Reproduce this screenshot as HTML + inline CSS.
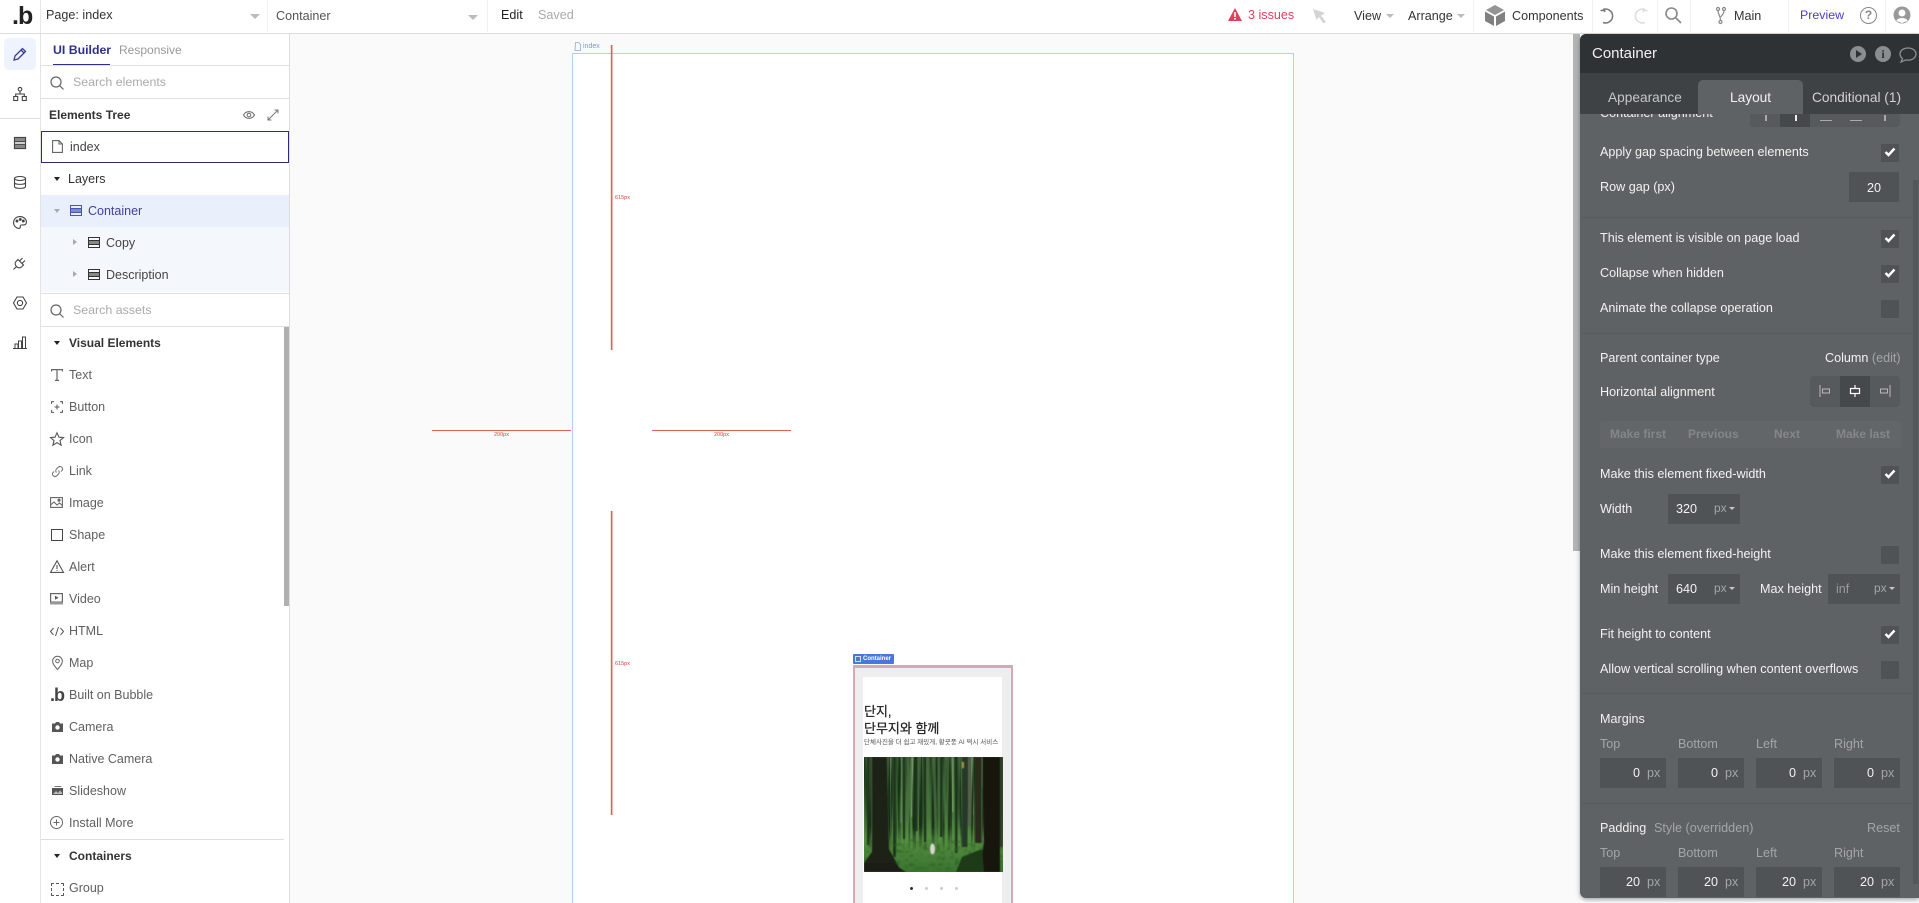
<!DOCTYPE html>
<html><head><meta charset="utf-8"><title>Bubble Editor</title>
<style>
html,body{margin:0;padding:0;width:1919px;height:903px;overflow:hidden;background:#fff}
body{position:relative;font-family:"Liberation Sans","Noto Sans CJK KR",sans-serif;font-size:12.6px;color:#3c3c3c}
.a{position:absolute}
.t{position:absolute;line-height:18px;height:18px;white-space:nowrap}
.ic{position:absolute;overflow:visible;fill:none;stroke:#555;stroke-width:1.2}
.tri{position:absolute;width:0;height:0;border-left:5px solid transparent;border-right:5px solid transparent;border-top:5px solid #bbb}
.sep{position:absolute;top:0;width:1px;height:32px;background:#f1f1f1}
.hr{position:absolute;left:41px;width:248px;height:1px;background:#e0e0e0}
.it{color:#5f5f5f;left:69px;font-size:12.5px}
.top{font-size:12.6px}
.w{color:#f2f2f2}
.g{color:#a3a6a8}
.cb{position:absolute;left:1881px;width:18px;height:18px;background:#505355;border-radius:1px}
.cb svg{position:absolute;left:3px;top:3px;width:12px;height:10px}
.in{position:absolute;background:#505355;height:30px;border-radius:1px}
.d{position:absolute;left:1582px;width:330px;height:1px;background:#585b5d}
.px{color:#a3a6a8;font-size:12px}
.hd{color:#333;font-size:12px;font-weight:bold}
.dim{color:#84878a;font-weight:bold;font-size:12px}
.lb{font-size:5.5px;color:#e0403c}
.rl{position:absolute;background:#e25f58}
.rv{box-shadow:1px 0 0 rgba(226,95,88,.45),-1px 0 0 rgba(226,95,88,.2)}
</style></head><body>

<!-- canvas -->
<div class="a" style="left:290px;top:34px;width:1290px;height:869px;background:#fafafa"></div>
<div class="a" style="left:572px;top:53px;width:720px;height:860px;background:#fff;border:1px solid #b6d0ea"></div>
<svg class="ic" style="left:575px;top:42px;stroke:#8ea8e0;stroke-width:.8" width="6" height="9"><path d="M.5.5h3l2 2v6h-5.500z"/></svg>
<div class="t" style="left:583px;top:38px;font-size:7px;color:#7f95dd">index</div>

<div class="rl rv" style="left:611px;top:45px;width:1px;height:305px"></div>
<div class="rl rv" style="left:611px;top:511px;width:1px;height:304px"></div>
<div class="rl" style="left:432px;top:430px;width:139px;height:1px"></div>
<div class="rl" style="left:652px;top:430px;width:139px;height:1px"></div>
<div class="t lb" style="left:615px;top:189px">615px</div>
<div class="t lb" style="left:615px;top:655px">615px</div>
<div class="t lb" style="left:494px;top:426px">200px</div>
<div class="t lb" style="left:714px;top:426px">200px</div>

<!-- mobile container -->
<div class="a" style="left:853px;top:654px;width:41px;height:10px;background:#4a78d8;border-radius:1px"></div>
<div class="t" style="left:863px;top:650px;font-size:6px;font-weight:bold;color:#fff">Container</div>
<div class="a" style="left:855px;top:656px;width:6px;height:6px;border:1px dashed #cfe0ff;box-sizing:border-box"></div>
<div class="a" style="left:853px;top:666px;width:156px;height:240px;background:#eee;border:2px solid #d2abb4;box-shadow:0 -1px 0 #a6b8e0"></div>
<div class="a" style="left:863px;top:677px;width:139px;height:226px;background:#fff"></div>
<div class="t" style="left:864px;top:703px;font-size:13px;color:#222;-webkit-text-stroke:.25px #222">단지,</div>
<div class="t" style="left:864px;top:720px;font-size:13px;color:#222;-webkit-text-stroke:.25px #222">단무지와 함께</div>
<div class="t" style="left:864px;top:734px;font-size:6.5px;color:#555">단체사진을 더 쉽고 재밌게, 황굣풍 AI 떡시 서비스</div>
<svg class="a" style="left:864px;top:757px" width="139" height="115" viewBox="0 0 139 115">
<defs>
<linearGradient id="bg" x1="0" y1="0" x2="0" y2="1"><stop offset="0" stop-color="#44663c"/><stop offset=".5" stop-color="#46743c"/><stop offset=".72" stop-color="#568f42"/><stop offset="1" stop-color="#3a7530"/></linearGradient>
<linearGradient id="fade" x1="0" y1="0" x2="0" y2="1"><stop offset="0" stop-color="#fff"/><stop offset=".6" stop-color="#fff"/><stop offset=".82" stop-color="#000"/></linearGradient>
<mask id="m"><rect width="139" height="115" fill="url(#fade)"/></mask>
<filter id="b" x="-5%" y="-5%" width="110%" height="110%"><feGaussianBlur stdDeviation=".5"/></filter>
<filter id="st" x="0" y="0" width="100%" height="100%" color-interpolation-filters="sRGB"><feTurbulence type="fractalNoise" baseFrequency=".32 .008" numOctaves="2" seed="7"/><feColorMatrix values="0 0 0 0 .09  0 0 0 0 .18  0 0 0 0 .09  4 0 0 0 -1.800"/></filter>
<filter id="gr" x="0" y="0" width="100%" height="100%" color-interpolation-filters="sRGB"><feTurbulence type="fractalNoise" baseFrequency=".22 .3" numOctaves="2" seed="3"/><feColorMatrix values="0 0 0 0 .18  0 0 0 0 .36  0 0 0 0 .14  3 0 0 0 -1.500"/><feGaussianBlur stdDeviation=".4"/></filter>
</defs>
<rect width="139" height="115" fill="url(#bg)"/>
<g filter="url(#b)">
<g fill="#9abb85" opacity=".55"><rect x="25" y="0" width="2" height="72"/><rect x="47" y="0" width="2.500" height="60"/><rect x="36" y="0" width="1.500" height="66"/><rect x="107" y="0" width="3" height="58"/><rect x="56" y="0" width="1.500" height="66"/><rect x="118" y="0" width="1.500" height="30"/><rect x="88" y="0" width="1.500" height="55"/></g>
</g>
<rect width="139" height="115" filter="url(#st)" mask="url(#m)"/>
<g filter="url(#b)">
<g fill="#1d351c"><rect x="3" y="0" width="2.500" height="88"/><rect x="29" y="0" width="3" height="100"/><rect x="39" y="0" width="2" height="82"/><rect x="51" y="0" width="2.500" height="74"/><rect x="60" y="0" width="2" height="85"/><rect x="76" y="0" width="2.500" height="80"/><rect x="91" y="0" width="2.500" height="96"/></g>
<rect x="0" y="82" width="139" height="33" filter="url(#gr)"/>
<path d="M8 0H23L25 92L37 114H0V106L8 95Z" fill="#1b2217"/>
<path d="M119 0H136V115H115L120 85Z" fill="#17190f"/>
<rect x="111" y="0" width="6.500" height="86" fill="#2a2a1e"/>
<rect x="98" y="0" width="5.500" height="90" fill="#26382a"/>
<rect x="104" y="0" width="3" height="68" fill="#55624a"/>
<rect x="136" y="0" width="3" height="90" fill="#33412c"/>
<path d="M0 106H28L42 115H0Z" fill="#1d1c12"/>
<path d="M98 100L118 92L120 115H92Z" fill="#1f3b18"/>
<ellipse cx="68.500" cy="92" rx="2.400" ry="5.500" fill="#d8d8d0"/>
<rect x="98" y="5" width="1.800" height="6" fill="#a89a45"/>
</g>
</svg>
<div class="a" style="left:910px;top:887px;width:3px;height:3px;border-radius:50%;background:#333"></div>
<div class="a" style="left:925px;top:887px;width:3px;height:3px;border-radius:50%;background:#ccc"></div>
<div class="a" style="left:940px;top:887px;width:3px;height:3px;border-radius:50%;background:#ccc"></div>
<div class="a" style="left:955px;top:887px;width:3px;height:3px;border-radius:50%;background:#ccc"></div>

<!-- top bar -->
<div class="a" style="left:0;top:0;width:1919px;height:33px;background:#fff;border-bottom:1px solid #ddd"></div>
<div class="t" style="left:12px;top:4px;font-size:25px;line-height:25px;height:25px;font-weight:bold;color:#222;letter-spacing:-1px">.b</div>
<div class="a" style="left:40px;top:0;width:1px;height:33px;background:#e8e8e8"></div>
<div class="t top" style="left:46px;top:6px;color:#333">Page: index</div>
<div class="tri" style="left:250px;top:14px"></div>
<div class="sep" style="left:267px"></div>
<div class="t top" style="left:276px;top:7px;color:#555">Container</div>
<div class="tri" style="left:468px;top:15px"></div>
<div class="sep" style="left:487px"></div>
<div class="t top" style="left:501px;top:6px;color:#222">Edit</div>
<div class="t top" style="left:538px;top:6px;color:#aaa">Saved</div>

<svg class="a" style="left:1228px;top:8px" width="14" height="13"><path d="M7 0L14 13H0Z" fill="#e0405a"/><rect x="6.200" y="4" width="1.600" height="5" fill="#fff"/><rect x="6.200" y="10" width="1.600" height="1.600" fill="#fff"/></svg>
<div class="t top" style="left:1248px;top:6px;color:#e0405a">3 issues</div>
<svg class="a" style="left:1312px;top:8px" width="16" height="16"><path d="M1 1L13 5L9 7.500L14 14L11.500 15.500L7 9L4.500 12Z" fill="#d4d4d4"/></svg>
<div class="t top" style="left:1354px;top:7px;color:#333">View</div>
<div class="tri" style="left:1386px;top:14px;border-width:4px 4px 0"></div>
<div class="t top" style="left:1408px;top:7px;color:#333">Arrange</div>
<div class="tri" style="left:1457px;top:14px;border-width:4px 4px 0"></div>
<div class="sep" style="left:1473px"></div>
<svg class="a" style="left:1485px;top:5px" width="20" height="21"><path d="M10 0L19 5L10 10L1 5Z" fill="#949494"/><path d="M0 6.500L9 11.500V21L0 16Z" fill="#808080"/><path d="M20 6.500L11 11.500V21L20 16Z" fill="#808080"/></svg>
<div class="t top" style="left:1512px;top:7px;color:#333">Components</div>
<div class="sep" style="left:1592px"></div>
<svg class="ic" style="left:1600px;top:8px;stroke:#777;stroke-width:1.500" width="16" height="16"><path d="M3 1.500A7 7 0 1 1 3 14.500M0.500 2.500H5M4 0.500L5 4"/></svg>
<svg class="ic" style="left:1632px;top:8px;stroke:#dcdcdc;stroke-width:1.500" width="16" height="16"><path d="M13 1.500A7 7 0 1 0 13 14.500M15.500 2.500H11M12 0.500L11 4"/></svg>
<div class="sep" style="left:1657px"></div>
<svg class="ic" style="left:1665px;top:7px;stroke:#888;stroke-width:1.600" width="17" height="17"><circle cx="6.500" cy="6.500" r="5.500"/><path d="M10.500 10.500L16 16"/></svg>
<div class="sep" style="left:1690px"></div>
<svg class="ic" style="left:1716px;top:7px;stroke:#888;stroke-width:1.200" width="10" height="17"><circle cx="2" cy="2" r="1.500"/><circle cx="8" cy="2" r="1.500"/><circle cx="4.500" cy="15" r="1.500"/><path d="M2 3.500C2 8 4.500 8 4.500 13.500M8 3.500C8 8 5 8 5 10"/></svg>
<div class="t top" style="left:1734px;top:7px;color:#333">Main</div>
<div class="sep" style="left:1788px"></div>
<div class="t" style="left:1800px;top:6px;color:#4a3bd0;font-size:12.400px">Preview</div>
<div class="a" style="left:1860px;top:7px;width:15px;height:15px;border:1.600px solid #888;border-radius:50%;text-align:center;line-height:15px;font-size:12px;font-weight:bold;color:#888">?</div>
<div class="sep" style="left:1885px"></div>
<svg class="a" style="left:1893px;top:6px" width="18" height="18"><circle cx="9" cy="9" r="8.500" fill="#999"/><circle cx="9" cy="7" r="3.500" fill="#fff"/><path d="M3.500 15C4 11 14 11 14.500 15L9 17Z" fill="#fff"/></svg>

<!-- left rail -->
<div class="a" style="left:40px;top:34px;width:1px;height:869px;background:#e4e4e4"></div>
<div class="a" style="left:4px;top:38px;width:32px;height:32px;background:#eef3fd;border-radius:5px"></div>
<svg class="ic" style="left:13px;top:47px;stroke:#3a3a9c;stroke-width:1.300" width="14" height="14"><path d="M1 13L2 9L9.500 1.500L12.500 4.500L5 12Z"/><path d="M8 3L11 6"/></svg>
<svg class="ic" style="left:13px;top:87px;stroke-width:1.100;stroke:#444" width="14" height="14"><circle cx="7" cy="2.200" r="1.800"/><rect x=".7" y="9.500" width="4" height="4"/><rect x="9.300" y="9.500" width="4" height="4"/><path d="M7 4V7M2.700 9.500V7H11.300V9.500"/></svg>
<div class="a" style="left:0;top:118px;width:40px;height:1px;background:#ddd"></div>
<svg class="ic" style="left:14px;top:137px;stroke:#444;stroke-width:1.100" width="12" height="12"><rect x=".5" y=".5" width="11" height="11"/><rect x=".5" y=".5" width="11" height="4.200" fill="#8a8a8a"/><rect x=".5" y="7.300" width="11" height="4.200" fill="#8a8a8a"/></svg>
<svg class="ic" style="left:14px;top:176px;stroke:#444;stroke-width:1.100" width="12" height="13"><ellipse cx="6" cy="2.500" rx="5.500" ry="2"/><path d="M.5 2.500V10.500C.5 13 11.500 13 11.500 10.500V2.500M.5 6.500C.5 9 11.500 9 11.500 6.500"/></svg>
<svg class="ic" style="left:13px;top:216px;stroke:#444;stroke-width:1.100" width="14" height="13"><path d="M7 .6C3 .6.6 3.300.6 6.600 .6 10 3.400 12.400 6 12.400 8 12.400 7 10.400 7.500 9.400 8 8.400 10 9.200 11.500 8.800 13 8.400 13.400 7 13.400 6 13.400 3 10.500.6 7 .6Z"/><circle cx="4" cy="5" r=".9" fill="#444"/><circle cx="7.300" cy="3.400" r=".9" fill="#444"/><circle cx="10.300" cy="5" r=".9" fill="#444"/></svg>
<svg class="ic" style="left:13px;top:256px;stroke:#444;stroke-width:1.100" width="14" height="14"><path d="M5 3.500L10.500 9L8.500 11C7 12.300 4.700 12 3.500 10.500 2 9.300 1.700 7 3 5.500ZM6.500 5L9.500 2M9 7.500L12 4.500M3.500 10.500L.5 13.500"/></svg>
<svg class="ic" style="left:13px;top:296px;stroke:#444;stroke-width:1.100" width="14" height="14"><path d="M4 1H10L13.500 7L10 13H4L.5 7Z"/><circle cx="7" cy="7" r="2.600"/></svg>
<svg class="ic" style="left:13px;top:336px;stroke:#444;stroke-width:1" width="14" height="13"><path d="M0 12.500H14M2 12V8H5V12M5.500 12V5H8.500V12M9.500 12V1H12.500V12"/></svg>

<!-- left panel -->
<div class="a" style="left:289px;top:34px;width:1px;height:869px;background:#ddd"></div>
<div class="t" style="left:53px;top:41px;color:#2f2f8f;font-size:12.300px;font-weight:bold">UI Builder</div>
<div class="t" style="left:119px;top:41px;color:#999;font-size:12px">Responsive</div>
<div class="a" style="left:53px;top:64px;width:57px;height:2px;background:#2f2f8f"></div>
<div class="hr" style="top:65px"></div>
<svg class="ic" style="left:50px;top:76px;stroke:#666;stroke-width:1.200" width="14" height="14"><circle cx="6" cy="6" r="5"/><path d="M9.500 9.500L13.500 13.500"/></svg>
<div class="t" style="left:73px;top:73px;color:#aaa;font-size:12.400px">Search elements</div>
<div class="hr" style="top:98px"></div>
<div class="t hd" style="left:49px;top:106px">Elements Tree</div>
<svg class="ic" style="left:243px;top:110px;stroke:#666;stroke-width:1" width="12" height="10"><path d="M.5 5C3 .5 9 .5 11.500 5 9 9.500 3 9.500 .5 5Z"/><circle cx="6" cy="5" r="1.800"/></svg>
<svg class="ic" style="left:267px;top:109px;stroke:#777;stroke-width:1" width="12" height="12"><path d="M1 11L11 1M7.500 1H11V4.500M1 7.500V11H4.500"/></svg>
<div class="a" style="left:41px;top:131px;width:248px;height:32px;box-sizing:border-box;border:1px solid #2e2a78"></div>
<svg class="ic" style="left:52px;top:140px;stroke:#666;stroke-width:1.100" width="11" height="13"><path d="M.6.6H7L10.400 4V12.400H.6Z"/><path d="M7 .6V4H10.400"/></svg>
<div class="t" style="left:70px;top:138px;color:#444;font-size:12.500px">index</div>
<div class="tri" style="left:54px;top:177px;border-width:4px 3.500px 0;border-top-color:#222"></div>
<div class="t" style="left:68px;top:170px;color:#333;font-size:12.500px">Layers</div>
<div class="a" style="left:41px;top:195px;width:248px;height:32px;background:#eaf0fb"></div>
<div class="a" style="left:41px;top:227px;width:248px;height:65px;background:#f4f8fd"></div>
<div class="tri" style="left:54px;top:209px;border-width:4px 3.500px 0;border-top-color:#aaa"></div>
<svg class="ic" style="left:70px;top:205px;stroke:#4a55b0;stroke-width:1" width="12" height="11"><rect x=".5" y=".5" width="11" height="10"/><rect x=".5" y="3.500" width="11" height="4" fill="#8089cf"/></svg>
<div class="t" style="left:88px;top:202px;color:#42429a;font-size:12.500px">Container</div>
<div class="a" style="left:73px;top:239px;border-left:4px solid #aaa;border-top:3.500px solid transparent;border-bottom:3.500px solid transparent"></div>
<svg class="ic" style="left:88px;top:237px;stroke:#333;stroke-width:1" width="12" height="11"><rect x=".5" y=".5" width="11" height="10"/><rect x=".5" y="3.500" width="11" height="4" fill="#888"/></svg>
<div class="t" style="left:106px;top:234px;color:#444;font-size:12.500px">Copy</div>
<div class="a" style="left:73px;top:271px;border-left:4px solid #aaa;border-top:3.500px solid transparent;border-bottom:3.500px solid transparent"></div>
<svg class="ic" style="left:88px;top:269px;stroke:#333;stroke-width:1" width="12" height="11"><rect x=".5" y=".5" width="11" height="10"/><rect x=".5" y="3.500" width="11" height="4" fill="#888"/></svg>
<div class="t" style="left:106px;top:266px;color:#444;font-size:12.500px">Description</div>
<div class="hr" style="top:293px"></div>
<svg class="ic" style="left:50px;top:304px;stroke:#666;stroke-width:1.200" width="14" height="14"><circle cx="6" cy="6" r="5"/><path d="M9.500 9.500L13.500 13.500"/></svg>
<div class="t" style="left:73px;top:301px;color:#aaa;font-size:12.400px">Search assets</div>
<div class="hr" style="top:326px"></div>
<div class="a" style="left:284px;top:327px;width:5px;height:279px;background:#b0b0b0"></div>

<div class="tri" style="left:54px;top:341px;border-width:4px 3.500px 0;border-top-color:#222"></div>
<div class="t hd" style="left:69px;top:334px">Visual Elements</div>
<div class="t it" style="top:366px">Text</div>
<div class="t it" style="top:398px">Button</div>
<div class="t it" style="top:430px">Icon</div>
<div class="t it" style="top:462px">Link</div>
<div class="t it" style="top:494px">Image</div>
<div class="t it" style="top:526px">Shape</div>
<div class="t it" style="top:558px">Alert</div>
<div class="t it" style="top:590px">Video</div>
<div class="t it" style="top:622px">HTML</div>
<div class="t it" style="top:654px">Map</div>
<div class="t it" style="top:686px">Built on Bubble</div>
<div class="t it" style="top:718px">Camera</div>
<div class="t it" style="top:750px">Native Camera</div>
<div class="t it" style="top:782px">Slideshow</div>
<div class="t it" style="top:814px">Install More</div>
<div class="a" style="left:41px;top:839px;width:243px;height:1px;background:#ddd"></div>
<div class="tri" style="left:54px;top:854px;border-width:4px 3.500px 0;border-top-color:#222"></div>
<div class="t hd" style="left:69px;top:847px">Containers</div>
<div class="t it" style="top:879px">Group</div>

<svg class="ic" style="left:51px;top:369px;stroke:#666" width="12" height="12"><path d="M.6 2.500V.6H11.400V2.500M6 .6V11.400M4 11.400H8"/></svg>
<svg class="ic" style="left:51px;top:401px;stroke:#555;stroke-width:1" width="12" height="12"><path d="M3 .6H.6V3M9 .6H11.400V3M3 11.400H.6V9M9 11.400H11.400V9M6 3.500V8.500M3.500 6H8.500"/></svg>
<svg class="ic" style="left:50px;top:432px;stroke:#555;stroke-width:1.100" width="14" height="14"><path d="M7 .8L9 5.200 13.500 5.600 10 8.600 11.100 13.200 7 10.700 2.900 13.200 4 8.600 .5 5.600 5 5.200Z"/></svg>
<svg class="ic" style="left:51px;top:465px;stroke:#777;stroke-width:1.100" width="13" height="13"><path d="M5.500 7.500A2.500 2.500 0 0 1 5.500 4L7.500 2A2.500 2.500 0 0 1 11 5.500L10 6.500M7.500 5.500A2.500 2.500 0 0 1 7.500 9L5.500 11A2.500 2.500 0 0 1 2 7.500L3 6.500"/></svg>
<svg class="ic" style="left:50px;top:497px;stroke:#666;stroke-width:1.100" width="13" height="11"><rect x=".6" y=".6" width="11.800" height="9.800"/><path d="M.6 8L4 5 7 8 9.500 6 12.400 8.500"/><circle cx="9" cy="3.200" r="1" fill="#666"/></svg>
<svg class="ic" style="left:51px;top:529px;stroke:#444;stroke-width:1" width="12" height="12"><rect x=".5" y=".5" width="11" height="11"/></svg>
<svg class="ic" style="left:50px;top:560px;stroke:#555;stroke-width:1.100" width="14" height="13"><path d="M7 .8L13.500 12.400H.5ZM7 5V9M7 10.200V11"/></svg>
<svg class="a" style="left:50px;top:593px" width="13" height="12"><rect x=".6" y=".6" width="11.800" height="8.500" fill="none" stroke="#666" stroke-width="1.200"/><path d="M5 2.800L8.500 4.800 5 6.800Z" fill="#555"/><rect x="0" y="10" width="13" height="1.500" fill="#999"/></svg>
<svg class="ic" style="left:50px;top:627px;stroke:#555;stroke-width:1" width="14" height="9"><path d="M3.500 1L.5 4.500 3.500 8M10.500 1L13.500 4.500 10.500 8M8.500 0L5.500 9"/></svg>
<svg class="ic" style="left:52px;top:656px;stroke:#666;stroke-width:1" width="11" height="14"><path d="M5.500 13.500C2 9.500.6 7.500.6 5.200A4.900 4.900 0 0 1 10.400 5.200C10.400 7.500 9 9.500 5.500 13.500Z"/><circle cx="5.500" cy="5" r="1.800"/></svg>
<div class="t" style="left:50px;top:686px;font-size:18px;font-weight:bold;color:#444;letter-spacing:-1px">.b</div>
<svg class="a" style="left:52px;top:722px" width="11" height="10"><path d="M0 1.500H3L4 0H7L8 1.500H11V10H0Z" fill="#555"/><circle cx="5.500" cy="5.500" r="2.200" fill="#fff"/></svg>
<svg class="a" style="left:52px;top:754px" width="11" height="10"><path d="M0 1.500H3L4 0H7L8 1.500H11V10H0Z" fill="#555"/><circle cx="5.500" cy="5.500" r="2.200" fill="#fff"/></svg>
<svg class="a" style="left:52px;top:786px" width="11" height="9"><path d="M2 1H9L9.500 0H3Z" fill="#777"/><rect x="0" y="2" width="11" height="7" fill="#555"/><path d="M1 8L4 5 6 7 8 4.500 10 6.500V8Z" fill="#bbb"/></svg>
<svg class="ic" style="left:50px;top:816px;stroke:#666;stroke-width:1" width="13" height="13"><circle cx="6.500" cy="6.500" r="6"/><path d="M6.500 3.500V9.500M3.500 6.500H9.500"/></svg>
<div class="a" style="left:51px;top:883px;width:11px;height:11px;border:1px dashed #555;border-radius:1px"></div>

<!-- right panel -->
<div class="a" style="left:1573px;top:34px;width:7px;height:517px;background:#b4b4b4"></div>
<div class="a" style="left:1580px;top:34px;width:339px;height:864px;background:#5f6264;border-radius:6px 0 0 6px;box-shadow:0 2px 5px rgba(0,0,0,.35)"></div>
<div class="a" style="left:1580px;top:34px;width:339px;height:39px;background:#2f3234;border-radius:6px 0 0 0"></div>
<div class="a" style="left:1580px;top:73px;width:339px;height:41px;background:#3f4244"></div>
<div class="a" style="left:1698px;top:80px;width:105px;height:34px;background:#5f6264;border-radius:5px 5px 0 0"></div>
<div class="t" style="left:1592px;top:45px;color:#f0f0f0;font-size:15px;line-height:18px">Container</div>
<div class="a" style="left:1850px;top:46px;width:16px;height:16px;border-radius:50%;background:#8b8e90"></div>
<div class="a" style="left:1856px;top:50px;border-left:6px solid #2f3234;border-top:4px solid transparent;border-bottom:4px solid transparent"></div>
<div class="a" style="left:1875px;top:46px;width:16px;height:16px;border-radius:50%;background:#8b8e90;color:#2f3234;text-align:center;font:bold 12px/16px 'Liberation Serif',serif">i</div>
<svg class="ic" style="left:1899px;top:47px;stroke:#8b8e90;stroke-width:1.300" width="18" height="16"><path d="M9 1C4.500 1 1 3.500 1 7 1 9 2 10.500 3.500 11.500L2 15 6.500 13C7.300 13.100 8 13.200 9 13.200 13.500 13.200 17 10.500 17 7S13.500 1 9 1Z"/></svg>
<div class="t" style="left:1608px;top:89px;color:#c5c8ca;font-size:13.700px">Appearance</div>
<div class="t" style="left:1730px;top:89px;color:#f2f2f2;font-size:13.700px">Layout</div>
<div class="t" style="left:1812px;top:89px;color:#d0d2d4;font-size:13.700px">Conditional (1)</div>

<div class="a" style="left:1913px;top:180px;width:5px;height:704px;background:#55585a"></div>

<!-- clipped row -->
<div class="a" style="left:1580px;top:114px;width:333px;height:14px;overflow:hidden">
<div class="t" style="left:20px;top:-10px;color:#f0f0f0">Container alignment</div>
<div class="a" style="left:170px;top:0;width:150px;height:13px;background:#565a5c;border-radius:0 0 4px 4px"></div>
<div class="a" style="left:200px;top:0;width:30px;height:13px;background:#46494b"></div>
<div class="a" style="left:185px;top:1px;width:2px;height:6px;background:#aaa"></div>
<div class="a" style="left:215px;top:1px;width:2px;height:6px;background:#eee"></div>
<div class="a" style="left:240px;top:6px;width:12px;height:1px;background:#aaa"></div>
<div class="a" style="left:270px;top:6px;width:12px;height:1px;background:#aaa"></div>
<div class="a" style="left:304px;top:1px;width:2px;height:6px;background:#aaa"></div>
</div>

<div class="t w" style="left:1600px;top:143px">Apply gap spacing between elements</div>
<div class="cb" style="top:144px"><svg viewBox="0 0 12 10"><path d="M1.500 5L4.500 8 10.500 1.500" fill="none" stroke="#fff" stroke-width="2.400"/></svg></div>
<div class="t w" style="left:1600px;top:178px">Row gap (px)</div>
<div class="in" style="left:1849px;top:172px;width:50px"></div>
<div class="t w" style="left:1867px;top:179px">20</div>
<div class="d" style="top:217px"></div>
<div class="t w" style="left:1600px;top:229px">This element is visible on page load</div>
<div class="cb" style="top:230px"><svg viewBox="0 0 12 10"><path d="M1.500 5L4.500 8 10.500 1.500" fill="none" stroke="#fff" stroke-width="2.400"/></svg></div>
<div class="t w" style="left:1600px;top:264px">Collapse when hidden</div>
<div class="cb" style="top:265px"><svg viewBox="0 0 12 10"><path d="M1.500 5L4.500 8 10.500 1.500" fill="none" stroke="#fff" stroke-width="2.400"/></svg></div>
<div class="t w" style="left:1600px;top:299px">Animate the collapse operation</div>
<div class="cb" style="top:300px"></div>
<div class="d" style="top:333px"></div>
<div class="t w" style="left:1600px;top:349px">Parent container type</div>
<div class="t w" style="left:1825px;top:349px">Column <span class="g">(edit)</span></div>
<div class="t w" style="left:1600px;top:383px">Horizontal alignment</div>
<div class="a" style="left:1810px;top:376px;width:90px;height:31px;background:#565a5c;border-radius:4px"></div>
<div class="a" style="left:1840px;top:376px;width:30px;height:31px;background:#46494b"></div>
<svg class="a" style="left:1819px;top:385px" width="12" height="12"><path d="M1 0V12" stroke="#b8b8b8"/><rect x="3.500" y="4" width="7" height="4" fill="none" stroke="#b8b8b8"/></svg>
<svg class="a" style="left:1849px;top:385px" width="12" height="12"><path d="M6 0V12" stroke="#fff" stroke-width="1.200"/><rect x="1.500" y="3.500" width="9" height="5" fill="#46494b" stroke="#fff" stroke-width="1.200"/></svg>
<svg class="a" style="left:1879px;top:385px" width="12" height="12"><path d="M11 0V12" stroke="#b8b8b8"/><rect x="1.500" y="4" width="7" height="4" fill="none" stroke="#b8b8b8"/></svg>
<div class="a" style="left:1600px;top:421px;width:301px;height:27px;background:#636668;border-radius:3px"></div>
<div class="t dim" style="left:1610px;top:425px">Make first</div>
<div class="t dim" style="left:1688px;top:425px">Previous</div>
<div class="t dim" style="left:1774px;top:425px">Next</div>
<div class="t dim" style="left:1836px;top:425px">Make last</div>
<div class="t w" style="left:1600px;top:465px">Make this element fixed-width</div>
<div class="cb" style="top:466px"><svg viewBox="0 0 12 10"><path d="M1.500 5L4.500 8 10.500 1.500" fill="none" stroke="#fff" stroke-width="2.400"/></svg></div>
<div class="t w" style="left:1600px;top:500px">Width</div>
<div class="in" style="left:1668px;top:494px;width:72px"></div>
<div class="t w" style="left:1676px;top:500px">320</div>
<div class="t px" style="left:1714px;top:499px">px</div>
<div class="tri" style="left:1729px;top:507px;border-width:3px 3px 0;border-top-color:#c8c8c8"></div>
<div class="t w" style="left:1600px;top:545px">Make this element fixed-height</div>
<div class="cb" style="top:546px"></div>
<div class="t w" style="left:1600px;top:580px">Min height</div>
<div class="in" style="left:1668px;top:574px;width:72px"></div>
<div class="t w" style="left:1676px;top:580px">640</div>
<div class="t px" style="left:1714px;top:579px">px</div>
<div class="tri" style="left:1729px;top:587px;border-width:3px 3px 0;border-top-color:#c8c8c8"></div>
<div class="t w" style="left:1760px;top:580px">Max height</div>
<div class="in" style="left:1828px;top:574px;width:72px"></div>
<div class="t" style="left:1836px;top:580px;color:#989b9d">inf</div>
<div class="t px" style="left:1874px;top:579px">px</div>
<div class="tri" style="left:1889px;top:587px;border-width:3px 3px 0;border-top-color:#c8c8c8"></div>
<div class="t w" style="left:1600px;top:625px">Fit height to content</div>
<div class="cb" style="top:626px"><svg viewBox="0 0 12 10"><path d="M1.500 5L4.500 8 10.500 1.500" fill="none" stroke="#fff" stroke-width="2.400"/></svg></div>
<div class="t w" style="left:1600px;top:660px">Allow vertical scrolling when content overflows</div>
<div class="cb" style="top:661px"></div>
<div class="d" style="top:693px"></div>
<div class="t w" style="left:1600px;top:710px">Margins</div>
<div class="t g" style="left:1600px;top:735px">Top</div>
<div class="t g" style="left:1678px;top:735px">Bottom</div>
<div class="t g" style="left:1756px;top:735px">Left</div>
<div class="t g" style="left:1834px;top:735px">Right</div>
<div class="in" style="left:1600px;top:758px;width:66px"></div>
<div class="in" style="left:1678px;top:758px;width:66px"></div>
<div class="in" style="left:1756px;top:758px;width:66px"></div>
<div class="in" style="left:1834px;top:758px;width:66px"></div>
<div class="t w" style="left:1633px;top:764px">0</div><div class="t g" style="left:1647px;top:764px">px</div>
<div class="t w" style="left:1711px;top:764px">0</div><div class="t g" style="left:1725px;top:764px">px</div>
<div class="t w" style="left:1789px;top:764px">0</div><div class="t g" style="left:1803px;top:764px">px</div>
<div class="t w" style="left:1867px;top:764px">0</div><div class="t g" style="left:1881px;top:764px">px</div>
<div class="d" style="top:803px"></div>
<div class="t w" style="left:1600px;top:819px">Padding</div>
<div class="t g" style="left:1654px;top:819px">Style (overridden)</div>
<div class="t g" style="left:1867px;top:819px">Reset</div>
<div class="t g" style="left:1600px;top:844px">Top</div>
<div class="t g" style="left:1678px;top:844px">Bottom</div>
<div class="t g" style="left:1756px;top:844px">Left</div>
<div class="t g" style="left:1834px;top:844px">Right</div>
<div class="in" style="left:1600px;top:867px;width:66px"></div>
<div class="in" style="left:1678px;top:867px;width:66px"></div>
<div class="in" style="left:1756px;top:867px;width:66px"></div>
<div class="in" style="left:1834px;top:867px;width:66px"></div>
<div class="t w" style="left:1626px;top:873px">20</div><div class="t g" style="left:1647px;top:873px">px</div>
<div class="t w" style="left:1704px;top:873px">20</div><div class="t g" style="left:1725px;top:873px">px</div>
<div class="t w" style="left:1782px;top:873px">20</div><div class="t g" style="left:1803px;top:873px">px</div>
<div class="t w" style="left:1860px;top:873px">20</div><div class="t g" style="left:1881px;top:873px">px</div>
</body></html>
